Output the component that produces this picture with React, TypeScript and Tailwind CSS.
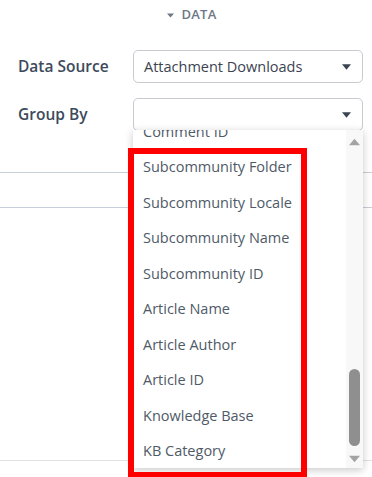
import React from 'react';

const options = [
    'Comment ID',
    'Subcommunity Folder',
    'Subcommunity Locale',
    'Subcommunity Name',
    'Subcommunity ID',
    'Article Name',
    'Article Author',
    'Article ID',
    'Knowledge Base',
    'KB Category',
];

function Caret({ className }: { className?: string }) {
    return (
        <svg viewBox="0 0 10 6" className={className} fill="currentColor">
            <path d="M0 0h10L5 6z" />
        </svg>
    );
}

function SelectBox({ value }: { value?: string }) {
    return (
        <div className="flex-1 h-[33px] flex items-center justify-between pl-[10px] pr-[11px] border border-[#c9c9d1] rounded-[5px] bg-white">
            <span className="text-[14.5px] text-[#3b4350]">{value}</span>
            <Caret className="w-[9px] h-[6px] text-[#3a4350]" />
        </div>
    );
}

export default function App() {
    return (
        <div
            className="relative w-[372px] h-[477px] overflow-hidden bg-white"
            style={{ fontFamily: '"Open Sans", "Noto Sans", sans-serif' }}
        >
            {/* Section header */}
            <div className="flex items-center justify-center gap-[8px] pt-[6px] pl-[11px] h-[24px] text-[#6d7785]">
                <Caret className="w-[7px] h-[5px]" />
                <span className="text-[13px] font-semibold tracking-[0.2px]">DATA</span>
            </div>

            {/* Form */}
            <div className="flex flex-col gap-[15px] pt-[26px] pl-[18px] pr-[9px]">
                <div className="flex items-center">
                    <label className="w-[115px] text-[15.5px] font-semibold text-[#3d4a5c]">Data Source</label>
                    <SelectBox value="Attachment Downloads" />
                </div>
                <div className="flex items-center">
                    <label className="w-[115px] text-[15.5px] font-semibold text-[#3d4a5c]">Group By</label>
                    <SelectBox />
                </div>
            </div>

            {/* Rows behind dropdown */}
            <div className="mt-[41px] border-t border-[#c8cfd9]" />
            <div className="mt-[34px] border-t border-[#c8cfd9]" />
            <div className="mt-[252px] border-t border-[#e2e2e2]" />

            {/* Open dropdown */}
            <div className="absolute left-[133px] top-[130px] w-[230px] h-[338px] bg-white shadow-[0_2px_8px_rgba(0,0,0,0.22)] flex overflow-hidden">
                <div className="flex-1 overflow-hidden">
                    <ul className="-mt-[16px]">
                        {options.map((o) => (
                            <li key={o} className="h-[35.5px] flex items-center pl-[10px] text-[14.5px] text-[#4f5a68]">
                                {o}
                            </li>
                        ))}
                    </ul>
                </div>
                <div className="w-[17px] bg-[#f8f8f8] flex flex-col items-center">
                    <Caret className="w-[11px] h-[8px] mt-[8px] rotate-180 text-[#a3a3a3]" />
                    <div className="flex-1" />
                    <div className="w-[11px] h-[77px] rounded-full bg-[#8f8f8f]" />
                    <Caret className="w-[11px] h-[8px] mt-[9px] mb-[5px] text-[#a3a3a3]" />
                </div>
            </div>

            {/* Highlight annotation */}
            <div className="absolute left-[128px] top-[148px] w-[179px] h-[330px] border-[6px] border-[#ff0000] pointer-events-none" />
        </div>
    );
}
